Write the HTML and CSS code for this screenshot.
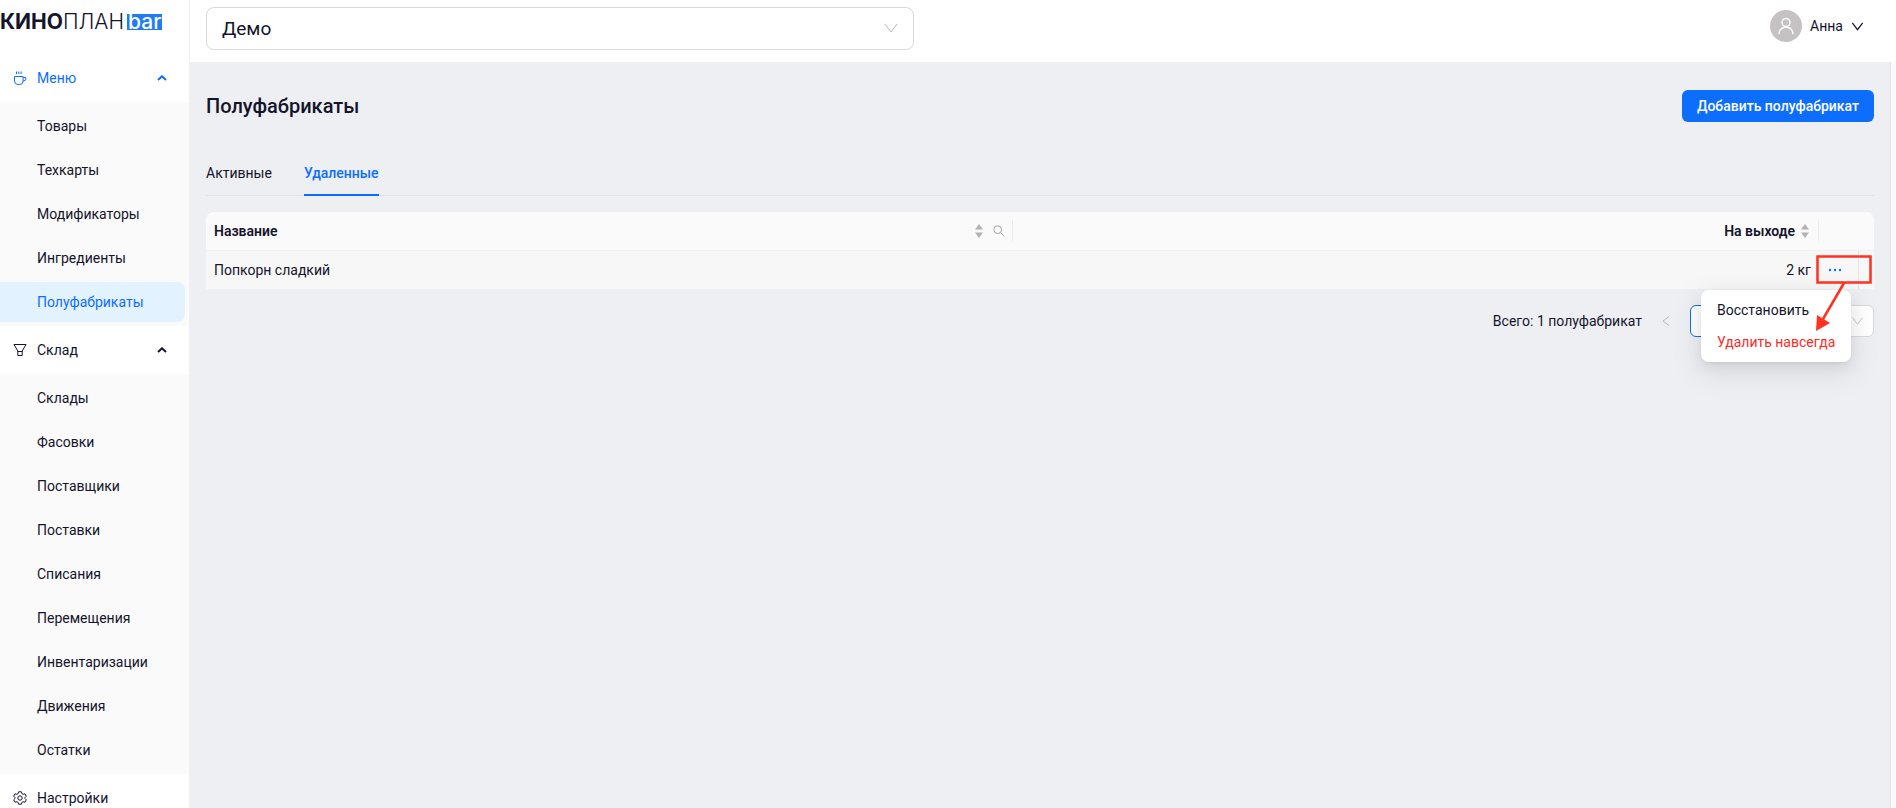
FILE: index.html
```
<!DOCTYPE html>
<html lang="ru">
<head>
    <meta charset="UTF-8">
    <meta name="viewport" content="width=device-width, initial-scale=1.0">
    <title>Полуфабрикаты</title>
    <link rel="stylesheet" href="styles.css">
</head>
<body>
    <aside class="sidebar">
        <a href="#" class="logo"><b>КИНО</b><span>ПЛАН</span><em>bar</em></a>

        <nav>
            <button type="button" class="menu-title active">
                <svg class="menu-icon" viewBox="0 0 14 14"><path d="M1.500 5.500h8.600v4.500a3.500 3.500 0 0 1-3.500 3.500H5a3.500 3.500 0 0 1-3.500-3.500zM10.100 6.500h2.700v2.300l-2.700 1.500M3.500.500v2.500M5.800.500v2.500M8.100.500v2.500"/></svg>
                <span>Меню</span>
                <svg class="menu-arrow" viewBox="0 0 10 6"><path d="M1 5l4-3.700L9 5"/></svg>
            </button>
            <ul class="submenu">
                <li><a href="#">Товары</a></li>
                <li><a href="#">Техкарты</a></li>
                <li><a href="#">Модификаторы</a></li>
                <li><a href="#">Ингредиенты</a></li>
                <li><a href="#" class="selected">Полуфабрикаты</a></li>
            </ul>

            <button type="button" class="menu-title">
                <svg class="menu-icon" viewBox="0 0 14 14"><path d="M1 1.500h12L9.200 8v4.500H4.800V8zM4.800 8.500h4.400"/></svg>
                <span>Склад</span>
                <svg class="menu-arrow" viewBox="0 0 10 6"><path d="M1 5l4-3.700L9 5"/></svg>
            </button>
            <ul class="submenu">
                <li><a href="#">Склады</a></li>
                <li><a href="#">Фасовки</a></li>
                <li><a href="#">Поставщики</a></li>
                <li><a href="#">Поставки</a></li>
                <li><a href="#">Списания</a></li>
                <li><a href="#">Перемещения</a></li>
                <li><a href="#">Инвентаризации</a></li>
                <li><a href="#">Движения</a></li>
                <li><a href="#">Остатки</a></li>
            </ul>

            <button type="button" class="menu-title">
                <svg class="menu-icon" viewBox="0 0 14 14"><path d="M5.600.8h2.800l.5 1.800 1.200.7 1.800-.5 1.400 2.400L12 6.500v1l1.300 1.300-1.400 2.400-1.800-.5-1.200.7-.5 1.800H5.600l-.5-1.800-1.200-.7-1.800.5L.7 8.800 2 7.500v-1L.7 5.200l1.400-2.400 1.800.5 1.200-.7z"/><circle cx="7" cy="7" r="2.200"/></svg>
                <span>Настройки</span>
            </button>
        </nav>
    </aside>

    <div class="layout">
        <header class="header">
            <div class="select-box cinema">
                <select aria-label="Кинотеатр"><option>Демо</option></select>
                <svg class="chevron" viewBox="0 0 14 10"><path d="M.8.800L7 9 13.200.800"/></svg>
            </div>
            <button type="button" class="user">
                <span class="avatar">
                    <svg viewBox="0 0 18 18"><circle cx="9" cy="5.500" r="4"/><path d="M2 17a7 7 0 0 1 14 0"/></svg>
                </span>
                <span>Анна</span>
                <svg class="user-arrow" viewBox="0 0 12 9"><path d="M.8.800L6 7.700 11.200.800"/></svg>
            </button>
        </header>

        <main class="content">
            <div class="page-head">
                <h1>Полуфабрикаты</h1>
                <button type="button" class="primary">Добавить полуфабрикат</button>
            </div>

            <div class="tabs">
                <a href="#">Активные</a>
                <a href="#" class="current">Удаленные</a>
            </div>

            <table>
                <colgroup>
                    <col>
                    <col>
                    <col class="col-actions">
                    <col class="col-scroll">
                </colgroup>
                <thead>
                    <tr>
                        <th>
                            <div class="th-inner">
                                <span class="th-title">Название</span>
                                <svg class="sorter" viewBox="0 0 8 14"><path d="M4 0l4 5.500H0zM4 14l4-5.500H0z"/></svg>
                                <svg class="search" viewBox="0 0 12 12"><circle cx="4.700" cy="4.700" r="3.900"/><path d="M7.600 7.600l3.800 3.800"/></svg>
                            </div>
                        </th>
                        <th>
                            <div class="th-inner right">
                                <span>На выходе</span>
                                <svg class="sorter" viewBox="0 0 8 14"><path d="M4 0l4 5.500H0zM4 14l4-5.500H0z"/></svg>
                            </div>
                        </th>
                        <th colspan="2"></th>
                    </tr>
                </thead>
                <tbody>
                    <tr>
                        <td>Попкорн сладкий</td>
                        <td class="num">2 кг</td>
                        <td class="actions">
                            <button type="button" class="more" aria-label="Действия">
                                <svg viewBox="0 0 14 4"><circle cx="2" cy="2" r="1.200"/><circle cx="7" cy="2" r="1.200"/><circle cx="12" cy="2" r="1.200"/></svg>
                            </button>
                            <div class="dropdown">
                                <button type="button">Восстановить</button>
                                <button type="button" class="danger">Удалить навсегда</button>
                            </div>
                            <svg class="marker" viewBox="0 0 56 78"><path class="line" d="M1.500 1.500h53v26h-53zM28 28L7 64"/><path class="tip" d="M0 76L1 60l13 8z"/></svg>
                        </td>
                        <td></td>
                    </tr>
                </tbody>
            </table>

            <div class="pagination">
                <span>Всего: 1 полуфабрикат</span>
                <button type="button" class="page-btn" aria-label="Назад" disabled>
                    <svg viewBox="0 0 8 10"><path d="M7 .500L1 5l6 4.500"/></svg>
                </button>
                <button type="button" class="page-btn page-current">1</button>
                <button type="button" class="page-btn" aria-label="Вперед" disabled>
                    <svg viewBox="0 0 8 10"><path d="M1 .500L7 5 1 9.500"/></svg>
                </button>
                <div class="select-box page-size">
                    <select aria-label="Строк на странице"><option></option></select>
                    <svg class="chevron" viewBox="0 0 14 10"><path d="M.8.800L7 9 13.200.800"/></svg>
                </div>
            </div>
        </main>
    </div>
</body>
</html>
```
FILE: styles.css
```
:root {
    --blue: #0d6efd;
    --text: #14142b;
    --bg: #eeeff3;
    --border: #d9d9d9;
    --red: #ff3120;
}
* {
    box-sizing: border-box;
}
body {
    margin: 0;
    height: 100vh;
    display: flex;
    overflow: hidden;
    font-family: Roboto, "Noto Sans", sans-serif;
    font-size: 14px;
    line-height: 22px;
    color: var(--text);
    background: var(--bg);
}
a {
    color: inherit;
    text-decoration: none;
}
button, select {
    font: inherit;
    color: inherit;
    cursor: pointer;
}
button {
    padding: 0;
    border: none;
    background: none;
}
svg {
    flex: none;
    fill: none;
    stroke: currentColor;
}

/* sidebar */
.sidebar {
    flex: none;
    width: 190px;
    overflow: hidden;
    background: #fff;
    border-right: 1px solid #f0f0f0;
}
.logo {
    display: flex;
    align-items: center;
    height: 44px;
    margin-bottom: 14px;
    font-family: Inter, sans-serif;
    font-size: 21px;
    line-height: 16px;
    font-weight: 300;
}
.logo b {
    font-weight: 700;
}
.logo em {
    margin-left: 3px;
    padding: 0 1px;
    background: #1f7cf5;
    color: #fff;
    font-style: normal;
    font-weight: 500;
}
.menu-title {
    display: flex;
    align-items: center;
    width: 100%;
    height: 40px;
    margin: 4px 0;
    padding: 0 22px 0 13px;
    text-align: left;
}
nav .menu-title:first-child {
    margin-top: 0;
}
.menu-title span {
    flex: 1;
}
.menu-title.active {
    color: var(--blue);
}
.menu-icon {
    width: 14px;
    height: 14px;
    margin-right: 10px;
}
.menu-arrow {
    width: 10px;
    height: 6px;
    stroke-width: 2;
}
.submenu {
    display: flex;
    flex-direction: column;
    gap: 4px;
    margin: 0;
    padding: 4px 4px 4px 0;
    list-style: none;
    background: #fafafa;
}
.submenu a {
    display: block;
    padding-left: 37px;
    line-height: 40px;
    border-radius: 0 8px 8px 0;
}
.submenu .selected {
    background: #e3f2ff;
    color: var(--blue);
}

/* header */
.layout {
    flex: 1;
    min-width: 0;
    display: flex;
    flex-direction: column;
}
.header {
    display: flex;
    justify-content: space-between;
    align-items: flex-start;
    height: 62px;
    padding: 7px 32px 0 16px;
    background: #fff;
}
.select-box {
    position: relative;
}
.select-box select {
    width: 100%;
    height: 100%;
    appearance: none;
    background: #fff;
    border: 1px solid var(--border);
    border-radius: 8px;
}
.chevron {
    position: absolute;
    top: 50%;
    right: 16px;
    width: 14px;
    height: 10px;
    margin-top: -6px;
    color: #b8b8b8;
    pointer-events: none;
}
.cinema {
    width: 708px;
    height: 43px;
}
.cinema select {
    padding: 0 15px;
    font-size: 19px;
}
.user {
    display: flex;
    align-items: center;
    gap: 8px;
    padding-top: 3px;
}
.avatar {
    display: flex;
    align-items: center;
    justify-content: center;
    width: 32px;
    height: 32px;
    border-radius: 50%;
    background: #c4c2c3;
    color: #fff;
}
.avatar svg {
    width: 18px;
    height: 18px;
    stroke-width: 1.5;
}
.user-arrow {
    width: 13px;
    height: 9px;
    stroke-width: 1.2;
}

/* content */
.content {
    flex: 1;
    padding: 28px 16px 0;
    margin-right: 5px;
    border-right: 1px solid #e2e3e6;
    box-shadow: 5px 0 #fafafa;
}
.page-head {
    display: flex;
    justify-content: space-between;
    align-items: center;
}
h1 {
    margin: 0;
    font-size: 20px;
    line-height: 32px;
    font-weight: 500;
}
.primary {
    height: 32px;
    padding: 0 15px;
    border-radius: 6px;
    background: var(--blue);
    color: #fff;
    font-weight: 500;
}
.tabs {
    display: flex;
    gap: 32px;
    margin: 28px 0 16px;
    border-bottom: 1px solid #e2e3e7;
}
.tabs a {
    padding: 12px 0 10px;
    margin-bottom: -1px;
    border-bottom: 2px solid transparent;
}
.tabs .current {
    color: var(--blue);
    border-color: var(--blue);
    font-weight: 500;
}

/* table */
table {
    width: 100%;
    table-layout: fixed;
    border-collapse: separate;
    border-spacing: 0;
}
.col-actions {
    width: 40px;
}
.col-scroll {
    width: 15px;
}
th, td {
    padding: 8px;
}
th {
    position: relative;
    height: 39px;
    background: #fafafa;
    border-bottom: 1px solid #f0f0f0;
    font-weight: 600;
    text-align: left;
}
th:first-child {
    border-top-left-radius: 8px;
}
th:last-child {
    border-top-right-radius: 8px;
}
th:not(:last-child)::after {
    content: "";
    position: absolute;
    top: 8px;
    right: 0;
    width: 1px;
    height: 21px;
    background: #ececec;
}
.th-inner {
    display: flex;
    align-items: center;
}
.th-inner.right {
    justify-content: flex-end;
    padding-right: 2px;
}
.th-title {
    flex: 1;
}
.sorter {
    width: 8px;
    height: 14px;
    margin-left: 6px;
    fill: #b2b2b5;
    stroke: none;
}
.search {
    width: 12px;
    height: 12px;
    margin-left: 10px;
    color: #a5a5a5;
}
td {
    height: 38px;
    background: #f7f7f7;
}
td.num {
    text-align: right;
}
td.actions {
    position: relative;
    padding: 0 0 0 9px;
    border-right: 1px solid #e4e4e6;
}
.more {
    display: flex;
    color: var(--blue);
}
.more svg {
    width: 14px;
    height: 4px;
    fill: currentColor;
    stroke: none;
}
.dropdown {
    position: absolute;
    top: 39px;
    right: 7px;
    z-index: 1;
    width: 150px;
    padding: 4px;
    border-radius: 8px;
    background: #fff;
    box-shadow: 0 6px 16px rgba(0,0,0,0.08), 0 3px 6px -4px rgba(0,0,0,0.12), 0 9px 28px 8px rgba(0,0,0,0.05);
}
.dropdown button {
    display: block;
    width: 100%;
    padding: 5px 12px;
    text-align: left;
    white-space: nowrap;
}
.dropdown .danger {
    color: #ff2a1f;
}
.marker {
    position: absolute;
    top: 4px;
    left: -3px;
    z-index: 2;
    width: 56px;
    height: 78px;
    pointer-events: none;
}
.marker .line {
    stroke: var(--red);
    stroke-width: 2.5;
}
.marker .tip {
    fill: var(--red);
    stroke: none;
}

/* pagination */
.pagination {
    display: flex;
    justify-content: flex-end;
    align-items: center;
    gap: 8px;
    margin-top: 16px;
}
.page-btn {
    display: flex;
    align-items: center;
    justify-content: center;
    width: 32px;
    height: 32px;
    border-radius: 6px;
}
.page-btn:disabled {
    color: #b8b8b8;
}
.page-btn svg {
    width: 8px;
    height: 10px;
}
.page-current {
    background: #fff;
    border: 1px solid var(--blue);
    color: var(--blue);
}
.page-size {
    width: 96px;
    height: 32px;
    margin-left: 8px;
}
.page-size select {
    border-radius: 6px;
}
.page-size .chevron {
    right: 11px;
    width: 11px;
    height: 8px;
    margin-top: -4px;
}
```
